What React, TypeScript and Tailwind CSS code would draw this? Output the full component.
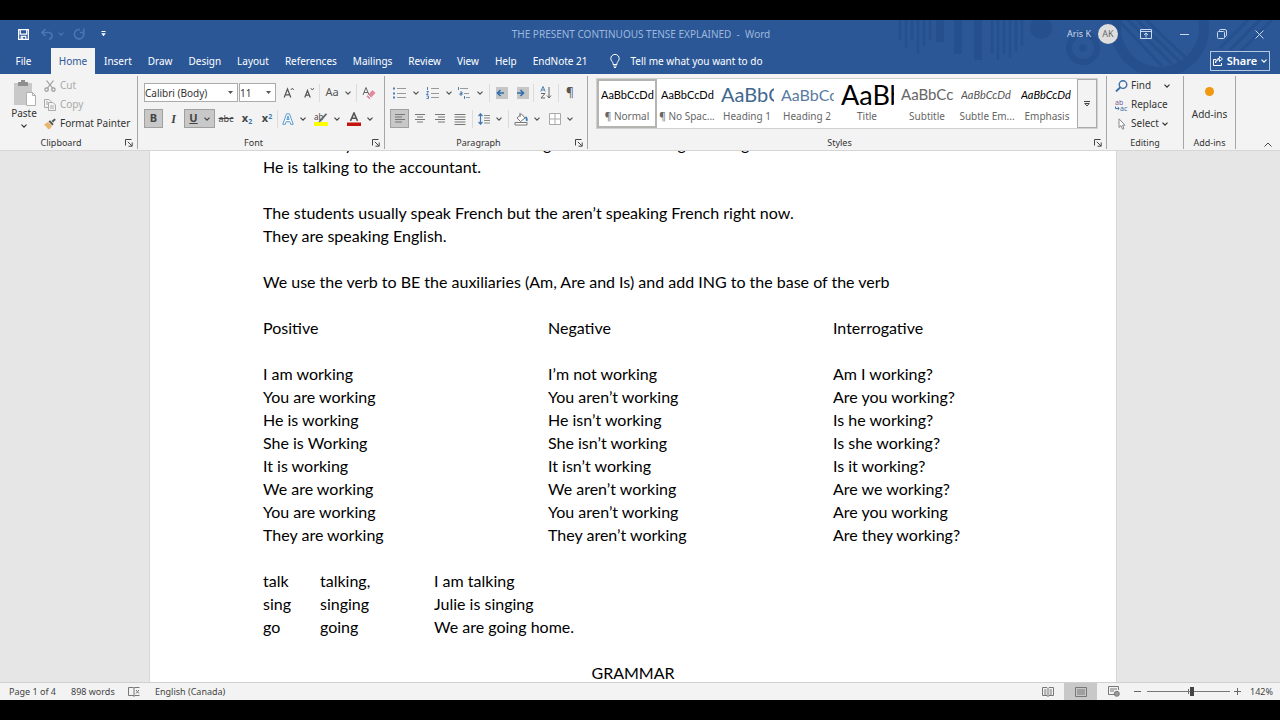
import React from "react";

type Kids = { children?: React.ReactNode };

const Chevron = ({ className = "" }: { className?: string }) => (
  <svg viewBox="0 0 6 4" className={`h-1 w-1.5 shrink-0 ${className}`} fill="none" stroke="currentColor" strokeWidth="1.2" aria-hidden="true">
    <path d="M0.5 0.6 3 3.1 5.5 0.6" />
  </svg>
);

const Rule = () => <span className="h-[18px] w-px shrink-0 bg-[#dcdcdc]" />;

const Tool = ({ label, w, active = false, children }: Kids & { label: string; w: string; active?: boolean }) => (
  <button
    type="button"
    aria-label={label}
    className={`flex h-[19px] shrink-0 items-center justify-center gap-1.5 ${w} ${active ? "border border-[#a0a0a0] bg-[#c8c8c8]" : ""}`}
  >
    {children}
  </button>
);

const Launcher = ({ label }: { label: string }) => (
  <button type="button" aria-label={label} className="absolute right-1 bottom-0.5">
    <svg viewBox="0 0 8 8" className="size-2" fill="none" stroke="#444" strokeWidth="1" aria-hidden="true">
      <path d="M0.5 6.5V0.5H6.5M2.8 2.8 6.8 6.8M7.2 3.5V7.2H3.5" />
    </svg>
  </button>
);

const Group = ({ title, width, launcher, children }: Kids & { title: string; width: string; launcher?: boolean }) => (
  <section aria-label={title} className={`relative mt-0.5 mb-px flex flex-col border-r border-[#a6a6a6] ${width}`}>
    <div className="min-h-0 flex-1">{children}</div>
    <div className={`text-center text-[9px] leading-[13px] text-[#333] ${launcher ? "pr-[15px]" : ""}`}>{title}</div>
    {launcher && <Launcher label={`${title} settings`} />}
  </section>
);

const Lines = ({ d }: { d: string }) => (
  <svg viewBox="0 0 12 12" className="size-3" fill="none" stroke="#777" strokeWidth="1" aria-hidden="true">
    <path d={d} />
  </svg>
);

const Combo = ({ label, value, w }: { label: string; value: string; w: string }) => (
  <div className={`relative flex h-[19px] items-center border border-[#ababab] bg-white ${w}`}>
    <select aria-label={label} defaultValue={value} className="w-full appearance-none bg-transparent text-[10px] leading-4 text-[#333] outline-none">
      <option>{value}</option>
    </select>
    <svg viewBox="0 0 5 3" className="pointer-events-none absolute right-1 h-[3px] w-[5px]" fill="#555" aria-hidden="true">
      <path d="M0 0H5L2.5 3Z" />
    </svg>
  </div>
);

const tabs = ["Insert", "Draw", "Design", "Layout", "References", "Mailings", "Review", "View", "Help", "EndNote 21"];

const TitleArt = () => (
  <svg viewBox="0 0 400 54" className="pointer-events-none absolute top-0 right-0 h-[54px] w-[400px]" fill="none" stroke="#26508d" aria-hidden="true">
    <g strokeWidth="2.5">
      <path d="M20 0V20M26 0V28M32 0V20M38 0V34M44 0V26M50 0V20M112 0V34M118 0V40M124 0V34M130 0V38M136 0V32M142 0V26" />
    </g>
    <g strokeWidth="8">
      <path d="M60 0V22M78 0V34M98 0V40" />
    </g>
    <circle cx="161" cy="8" r="11" fill="#26508d" stroke="none" />
    <circle cx="203" cy="28" r="14" strokeWidth="6" />
    <circle cx="203" cy="28" r="4" fill="#26508d" stroke="none" />
    <circle cx="280" cy="8" r="44" strokeWidth="10" />
    <g strokeWidth="3">
      <path d="M248 0 292 44M257 0 300 42M266 0 308 40M240 2 282 46M350 30 380 0M358 34 392 0M340 28 368 0" />
    </g>
  </svg>
);

const Header = () => (
  <header className="relative shrink-0 bg-[#2b5797] text-white">
    <TitleArt />
    <div className="relative flex h-7 items-center">
      <div className="flex flex-1 items-center pl-[18px]">
        <button type="button" aria-label="Save">
          <svg viewBox="0 0 12 12" className="size-[11px]" fill="none" stroke="currentColor" strokeWidth="1.3" aria-hidden="true">
            <path d="M0.7 0.7H11.3V11.3H0.7ZM2.5 1V5.5H9.5V1M3.5 11V8H8.5V11M5 9V11" />
          </svg>
        </button>
        <button type="button" aria-label="Undo" className="ml-3 flex items-center gap-[5px] text-[#4b76b3]">
          <svg viewBox="0 0 12 12" className="size-3" fill="none" stroke="currentColor" strokeWidth="1.6" aria-hidden="true">
            <path d="M4.5 1 1 4.5 4.5 8M1 4.5H8C12 5 12 10.5 8 11.3" />
          </svg>
          <Chevron />
        </button>
        <button type="button" aria-label="Repeat" className="ml-[9px] text-[#4b76b3]">
          <svg viewBox="0 0 12 12" className="size-3" fill="none" stroke="currentColor" strokeWidth="1.6" aria-hidden="true">
            <path d="M7 1.6A4.7 4.7 0 1 0 10.6 5M7 4.5H10.8V0.5" />
          </svg>
        </button>
        <button type="button" aria-label="Customize Quick Access Toolbar" className="ml-4">
          <svg viewBox="0 0 5 6" className="h-1.5 w-[5px]" fill="currentColor" aria-hidden="true">
            <path d="M0.5 0H4.5V1H0.5ZM0.2 2.2H4.8L2.5 5.2Z" />
          </svg>
        </button>
      </div>
      <h1 className="text-[10px] whitespace-pre text-[#9db8dc]">THE PRESENT CONTINUOUS TENSE EXPLAINED  -  Word</h1>
      <div className="flex flex-1 items-center justify-end pr-4 text-[#c9d8ec]">
        <span className="text-[9px]">Aris K</span>
        <span className="ml-[7px] flex size-5 items-center justify-center rounded-full bg-[#dedede] text-[9px] text-[#666]">AK</span>
        <button type="button" aria-label="Ribbon display options" className="ml-[22px]">
          <svg viewBox="0 0 12 10" className="h-2.5 w-3" fill="none" stroke="currentColor" aria-hidden="true">
            <path d="M0.5 0.5H11.5V9.5H0.5ZM0.5 2.5H11.5M6 8.5V4M4 6 6 4 8 6" />
          </svg>
        </button>
        <button type="button" aria-label="Minimize" className="ml-7">
          <svg viewBox="0 0 9 9" className="size-[9px]" stroke="currentColor" aria-hidden="true"><path d="M0 4.5H9" /></svg>
        </button>
        <button type="button" aria-label="Restore" className="ml-7">
          <svg viewBox="0 0 10 10" className="size-2.5" fill="none" stroke="currentColor" aria-hidden="true">
            <rect x="0.5" y="2.5" width="7" height="7" rx="1" />
            <path d="M2.5 2.5V1.5Q2.5 0.5 3.5 0.5H8Q9.5 0.5 9.5 2V6.5Q9.5 7.5 7.5 7.5" />
          </svg>
        </button>
        <button type="button" aria-label="Close" className="ml-7">
          <svg viewBox="0 0 9 9" className="size-[9px]" stroke="currentColor" aria-hidden="true"><path d="M0.5 0.5 8.5 8.5M8.5 0.5 0.5 8.5" /></svg>
        </button>
      </div>
    </div>
    <nav className="relative flex h-[26px] items-stretch text-[10px]" aria-label="Ribbon tabs">
      <button type="button" className="w-[51px] pr-1 text-center">File</button>
      <button type="button" className="w-11 bg-[#f3f3f3] text-center text-[#2b5797]">Home</button>
      <div className="flex pl-px">
        {tabs.map((t) => (
          <button key={t} type="button" className="px-2 whitespace-nowrap">{t}</button>
        ))}
      </div>
      <button type="button" className="ml-3.5 flex items-center gap-[11px] whitespace-nowrap">
        <svg viewBox="0 0 10 14" className="h-3.5 w-2.5" fill="none" stroke="currentColor" aria-hidden="true">
          <path d="M3 10.5V9.2C3 7.8 0.8 7 0.8 4.6A4.2 4.2 0 0 1 9.2 4.6C9.2 7 7 7.8 7 9.2V10.5ZM3.2 12H6.8M4 13.5H6" />
        </svg>
        Tell me what you want to do
      </button>
      <button type="button" className="mt-[3px] mr-2.5 mb-[3px] ml-auto flex w-[60px] items-center justify-center gap-1 border border-[#b5c8e2] text-[11px] font-semibold">
        <svg viewBox="0 0 10 10" className="size-2.5 shrink-0" fill="none" stroke="currentColor" aria-hidden="true">
          <path d="M3 3.5H0.5V9.5H8.5V7M2.5 7C3 4.5 4.5 3.5 6.5 3.5V5.5L9.5 3 6.5 0.5V2.3C4 2.5 2.6 4.5 2.5 7Z" />
        </svg>
        Share
        <Chevron />
      </button>
    </nav>
  </header>
);

const Clipboard = () => (
  <Group title="Clipboard" width="w-[138px]" launcher>
    <div className="flex pl-3 text-[10px] text-[#333]">
      <button type="button" className="flex w-6 flex-col items-center pt-1">
        <svg viewBox="0 0 24 26" className="h-[26px] w-6" aria-hidden="true">
          <path d="M2 3H20V25H2Z" fill="#c9c9c9" />
          <path d="M6 2H9V0H13V2H16V6H6Z" fill="#8f8f8f" />
          <path d="M14.5 12.5H20.5L23.5 15.5V25.5H14.5ZM20.5 12.5V15.5H23.5" fill="#fff" stroke="#b0b0b0" />
        </svg>
        <span className="leading-[14px]">Paste</span>
        <Chevron className="mt-1" />
      </button>
      <div className="ml-2 flex flex-col">
        <button type="button" className="flex h-[19px] items-center gap-1 text-[#a9a9a9]">
          <svg viewBox="0 0 12 12" className="size-3" fill="none" stroke="#999" strokeWidth="1.2" aria-hidden="true">
            <path d="M2.5 0.5 8.5 8M9.5 0.5 3.5 8" /><circle cx="2.6" cy="9.6" r="1.7" /><circle cx="9.4" cy="9.6" r="1.7" />
          </svg>
          Cut
        </button>
        <button type="button" className="flex h-[19px] items-center gap-1 text-[#a9a9a9]">
          <svg viewBox="0 0 12 12" className="size-3" fill="#f3f3f3" stroke="#aaa" aria-hidden="true">
            <path d="M0.5 0.5H5L7 2.5V8.5H0.5ZM2 3H4M2 5H4" /><path d="M4.5 3.5H9L11.5 6V11.5H4.5ZM6 7H10M6 9H10" />
          </svg>
          Copy
        </button>
        <button type="button" className="flex h-[19px] items-center gap-1 whitespace-nowrap">
          <svg viewBox="0 0 12 12" className="size-3" aria-hidden="true">
            <path d="M0 6.5 4 4 8 8 5.5 11.5 3.5 10.5 2.5 9Z" fill="#e8b56a" /><path d="M4.5 3.5 6 2.2 9.6 6 8.3 7.4Z" fill="#555" /><path d="M7.5 3 10.5 0.5 11.8 1.8 9 4.6Z" fill="#555" />
          </svg>
          Format Painter
        </button>
      </div>
    </div>
  </Group>
);

const FontGroup = () => (
  <Group title="Font" width="w-[247px]" launcher>
    <div className="flex items-center pt-[7px] pl-1.5 text-[#555]">
      <Combo label="Font" value="Calibri (Body)" w="w-[94px] mr-px" />
      <Combo label="Font size" value="11" w="w-[37px] mr-[3px]" />
      <Tool label="Grow font" w="w-5">
        <svg viewBox="0 0 12 12" className="size-3" fill="none" stroke="currentColor" aria-hidden="true">
          <path d="M1.2 10.5 4.5 2 7.8 10.5M2.3 7.8H6.7" strokeWidth="1.2" /><path d="M7.8 3 9.3 1.2 10.8 3" />
        </svg>
      </Tool>
      <Tool label="Shrink font" w="w-5">
        <svg viewBox="0 0 12 12" className="size-3" fill="none" stroke="currentColor" aria-hidden="true">
          <path d="M1.8 10.5 4.5 3.5 7.2 10.5M2.8 8.2H6.2" strokeWidth="1.2" /><path d="M7.8 1.2 9.3 3 10.8 1.2" />
        </svg>
      </Tool>
      <Rule />
      <Tool label="Change case" w="w-9"><span className="text-[11px]">Aa</span><Chevron /></Tool>
      <Rule />
      <Tool label="Clear formatting" w="w-6">
        <svg viewBox="0 0 14 14" className="size-3.5" aria-hidden="true">
          <path d="M1 9 4 1.5 7 9M2 6.5H6" fill="none" stroke="#666" /><path d="M4.5 10.5 10.5 4 13.5 7 7.5 13.2Z" fill="#e08a9d" /><path d="M6 9 9 12" stroke="#fff" />
        </svg>
      </Tool>
    </div>
    <div className="flex items-center pt-[7px] pl-1.5 text-[11px] text-[#444]">
      <Tool label="Bold" w="w-[19px]" active><b>B</b></Tool>
      <Tool label="Italic" w="w-[21px]"><i className="font-['Liberation_Serif',serif] text-xs font-bold">I</i></Tool>
      <Tool label="Underline" w="w-[31px]" active><b className="underline">U</b><Chevron /></Tool>
      <Tool label="Strikethrough" w="w-[22px]"><s className="text-[9px]">abc</s></Tool>
      <Tool label="Subscript" w="w-5"><b>x<sub className="text-[7px] text-[#3c7ab5]">2</sub></b></Tool>
      <Tool label="Superscript" w="w-5"><b>x<sup className="text-[7px] text-[#3c7ab5]">2</sup></b></Tool>
      <Rule />
      <Tool label="Text effects" w="w-8">
        <svg viewBox="0 0 12 12" className="size-3" fill="#fff" stroke="#5b9bd0" aria-hidden="true">
          <path d="M0.8 11.3 4.5 0.8H7.5L11.2 11.3H8.7L7.9 8.7H4.1L3.3 11.3ZM4.8 6.5H7.2L6 2.8Z" />
        </svg>
        <Chevron />
      </Tool>
      <Tool label="Highlight color" w="w-[34px]">
        <svg viewBox="0 0 14 14" className="size-3.5" aria-hidden="true">
          <rect y="10" width="14" height="4" fill="#ffff00" />
          <text x="0" y="8" fontSize="8" fill="#444" fontFamily="Noto Sans">ab</text>
          <path d="M13.3 2 7 9.5 4.5 10.5 5.5 8 11.5 1.5Z" fill="#666" />
        </svg>
        <Chevron />
      </Tool>
      <Tool label="Font color" w="w-8">
        <svg viewBox="0 0 14 14" className="size-3.5" aria-hidden="true">
          <rect y="10.5" width="14" height="3.5" fill="#c4150c" />
          <path d="M3.5 8.8 7 1 10.5 8.8M4.8 6.2H9.2" fill="none" stroke="#555" strokeWidth="1.6" />
        </svg>
        <Chevron />
      </Tool>
    </div>
  </Group>
);

const Paragraph = () => (
  <Group title="Paragraph" width="w-[203px]" launcher>
    <div className="flex items-center pt-[7px] pl-[5px] text-[#555]">
      <Tool label="Bullets" w="w-8">
        <svg viewBox="0 0 14 12" className="h-3 w-3.5" aria-hidden="true"><path d="M0 1.5H2M0 6.5H2M0 10.5H2" stroke="#4a80b5" strokeWidth="2" /><path d="M4 1.5H13M4 6.5H13M4 10.5H13" stroke="#999" /></svg>
        <Chevron />
      </Tool>
      <Tool label="Numbering" w="w-[34px]">
        <svg viewBox="0 0 14 12" className="h-3 w-3.5" aria-hidden="true"><path d="M1.5 0V3M0.5 4.5H2.5L0.5 7.5H2.5M0.5 9H2.5V11.5H0.5" fill="none" stroke="#4a80b5" /><path d="M5 1.5H13M5 6.5H13M5 10.5H13" stroke="#999" /></svg>
        <Chevron />
      </Tool>
      <Tool label="Multilevel list" w="w-7">
        <svg viewBox="0 0 14 12" className="h-3 w-3.5" aria-hidden="true"><path d="M1.5 0V3M3 5H5V8H3V6.5H5M7.5 9V12" fill="none" stroke="#4a80b5" /><path d="M3 1.5H11M7 6.5H12M9 10.5H13" stroke="#999" /></svg>
        <Chevron />
      </Tool>
      <span className="w-[5px]" />
      <Rule />
      <Tool label="Decrease indent" w="w-[23px]">
        <svg viewBox="0 0 12 12" className="size-3" aria-hidden="true"><rect width="12" height="12" fill="#c6c6c6" /><path d="M8 6H1.5M4.5 3 1.5 6 4.5 9" fill="none" stroke="#2f6fae" strokeWidth="1.6" /></svg>
      </Tool>
      <Tool label="Increase indent" w="w-5">
        <svg viewBox="0 0 12 12" className="size-3" aria-hidden="true"><rect width="12" height="12" fill="#c6c6c6" /><path d="M0 6H6.5M3.5 3 6.5 6 3.5 9" fill="none" stroke="#2f6fae" strokeWidth="1.6" /></svg>
      </Tool>
      <Rule />
      <Tool label="Sort" w="w-6">
        <svg viewBox="0 0 12 13" className="h-[13px] w-3" fill="none" aria-hidden="true"><path d="M0.8 5.5 3 0.5 5.2 5.5M1.5 4H4.5" stroke="#4a80b5" /><path d="M1 7.5H5L1 12H5" stroke="#666" /><path d="M9 1V12M7 9.5 9 12 11 9.5" stroke="#666" /></svg>
      </Tool>
      <Rule />
      <Tool label="Show formatting marks" w="w-[22px]"><span className="text-xs">¶</span></Tool>
    </div>
    <div className="flex items-center pt-[7px] pl-[5px] text-[#555]">
      <Tool label="Align left" w="w-[19px]" active><Lines d="M1 1.5H11M1 4H8M1 6.5H11M1 9H8" /></Tool>
      <Tool label="Center" w="w-[21px]"><Lines d="M1 1.5H11M3 4H9M1 6.5H11M3 9H9" /></Tool>
      <Tool label="Align right" w="w-5"><Lines d="M1 1.5H11M4 4H11M1 6.5H11M4 9H11" /></Tool>
      <Tool label="Justify" w="w-5"><Lines d="M0.5 1.5H11.5M0.5 4H11.5M0.5 6.5H11.5M0.5 9H11.5M0.5 11.5H11.5" /></Tool>
      <span className="w-0.5" />
      <Rule />
      <Tool label="Line spacing" w="w-[34px]">
        <svg viewBox="0 0 12 12" className="size-3" fill="none" aria-hidden="true"><path d="M2.5 1V11M0.5 3 2.5 0.8 4.5 3M0.5 9 2.5 11.2 4.5 9" stroke="#3c7ab5" strokeWidth="1.2" /><path d="M6 2.5H12M6 5H12M6 7.5H12M6 10H12" stroke="#888" /></svg>
        <Chevron />
      </Tool>
      <span className="w-px" />
      <Rule />
      <Tool label="Shading" w="w-9">
        <svg viewBox="0 0 14 14" className="size-3.5" fill="none" stroke="#777" aria-hidden="true"><path d="M1 10.5H13V13H1ZM3 6 7.5 2 11 6 6.5 9.5ZM6 0.8V5" fill="#fff" /><path d="M11.5 5Q13.5 7 12.5 9" stroke="#3c7ab5" strokeWidth="1.8" /></svg>
        <Chevron />
      </Tool>
      <Tool label="Borders" w="w-8">
        <svg viewBox="0 0 12 12" className="size-3" fill="none" stroke="#a9a9a9" aria-hidden="true"><path d="M0.5 0.5H11.5V11.5H0.5ZM6 0.5V11.5M0.5 6H11.5" fill="#fff" /></svg>
        <Chevron />
      </Tool>
    </div>
  </Group>
);

const styles = [
  { name: "¶ Normal", sample: "AaBbCcDd", look: "text-[11px] text-black" },
  { name: "¶ No Spac...", sample: "AaBbCcDd", look: "text-[11px] text-black" },
  { name: "Heading 1", sample: "AaBbC", look: "text-[20px] text-[#41688f]" },
  { name: "Heading 2", sample: "AaBbCc", look: "text-[16px] text-[#5a7ba0]" },
  { name: "Title", sample: "AaBb", look: "text-[27px] text-black" },
  { name: "Subtitle", sample: "AaBbCc", look: "text-[15px] text-[#666]" },
  { name: "Subtle Em...", sample: "AaBbCcDd", look: "text-[11px] text-[#555] italic" },
  { name: "Emphasis", sample: "AaBbCcDd", look: "text-[11px] text-black italic" },
];

const StylesGroup = () => (
  <Group title="Styles" width="min-w-0 flex-1" launcher>
    <div className="mt-0.5 mr-2 ml-2 flex h-[51px] border border-[#d0d0d0] bg-white">
      <div className="flex min-w-0 flex-1 overflow-hidden">
        {styles.map((s, i) => (
          <button
            key={s.name}
            type="button"
            className={`flex w-[60px] shrink-0 flex-col border-2 ${i === 0 ? "border-[#b4b4b0]" : "border-transparent"}`}
          >
            <span className={`ml-0.5 flex h-[27px] w-[53px] items-center overflow-hidden font-['Lato','Noto_Sans',sans-serif] leading-[27px] whitespace-nowrap ${s.look}`}>{s.sample}</span>
            <span className="w-full text-center text-[10px] leading-4 whitespace-nowrap text-[#666]">{s.name}</span>
          </button>
        ))}
      </div>
      <button type="button" aria-label="More styles" className="flex w-5 items-center justify-center border border-[#ababab] bg-[#f3f3f3] text-[#444]">
        <svg viewBox="0 0 6 6" className="size-1.5" fill="none" stroke="currentColor" aria-hidden="true"><path d="M0 0.5H6M0.8 2.5H5.2L3 5Z" /></svg>
      </button>
    </div>
  </Group>
);

const Editing = () => (
  <Group title="Editing" width="w-[77px]">
    <div className="flex flex-col pl-2 text-[10px] text-[#333]">
      <button type="button" className="flex h-[19px] items-center gap-[3px]">
        <svg viewBox="0 0 13 12" className="h-3 w-[13px]" fill="none" stroke="#3c6fa8" strokeWidth="1.4" aria-hidden="true"><circle cx="8" cy="4.6" r="3.8" /><path d="M5.2 7.4 1 11.4" strokeWidth="2" /></svg>
        Find
        <Chevron className="ml-2.5" />
      </button>
      <button type="button" className="flex h-[19px] items-center gap-[3px]">
        <svg viewBox="0 0 13 12" className="h-3 w-[13px]" aria-hidden="true">
          <text x="0" y="6" fontSize="7" fill="#7b5a9a" fontFamily="Noto Sans">ab</text>
          <text x="5" y="12" fontSize="7" fill="#3c6fa8" fontFamily="Noto Sans">ac</text>
          <path d="M0.5 7.5V9.5H4M2.8 8.2 4.2 9.5 2.8 10.8" fill="none" stroke="#3c6fa8" />
        </svg>
        Replace
      </button>
      <button type="button" className="flex h-[19px] items-center gap-[3px]">
        <svg viewBox="0 0 13 12" className="h-3 w-[13px]" fill="#fff" stroke="#888" aria-hidden="true"><path d="M4 0.8V9.5L6 7.6 7.5 11.2 9 10.5 7.5 7.2H10Z" /></svg>
        Select
        <Chevron />
      </button>
    </div>
  </Group>
);

const Ribbon = () => (
  <div className="flex h-[77px] shrink-0 border-b border-[#d6d6d6] bg-[#f3f3f3]">
    <Clipboard />
    <FontGroup />
    <Paragraph />
    <StylesGroup />
    <Editing />
    <Group title="Add-ins" width="w-[52px]">
      <button type="button" className="flex w-full flex-col items-center pt-[11px] text-[10px] leading-[14px] text-[#333]">
        <span className="mb-[11px] size-[9px] rounded-full bg-[#f0980f]" />
        Add-ins
      </button>
    </Group>
    <div className="flex w-11 items-end justify-end pr-2 pb-[3px] text-[#444]">
      <button type="button" aria-label="Collapse ribbon">
        <svg viewBox="0 0 8 5" className="h-[5px] w-2" fill="none" stroke="currentColor" aria-hidden="true"><path d="M0.5 4.5 4 1 7.5 4.5" /></svg>
      </button>
    </div>
  </div>
);

const conjugation = [
  ["I am working", "I’m not working", "Am I working?"],
  ["You are working", "You aren’t working", "Are you working?"],
  ["He is working", "He isn’t working", "Is he working?"],
  ["She is Working", "She isn’t working", "Is she working?"],
  ["It is working", "It isn’t working", "Is it working?"],
  ["We are working", "We aren’t working", "Are we working?"],
  ["You are working", "You aren’t working", "Are you working"],
  ["They are working", "They aren’t working", "Are they working?"],
];

const verbs = [
  ["talk", "talking,", "I am talking"],
  ["sing", "singing", "Julie is singing"],
  ["go", "going", "We are going home."],
];

const Document = () => (
  <main className="flex min-h-0 flex-1 justify-center overflow-hidden bg-[#e6e6e6] pr-3.5">
    <article className="w-full max-w-[968px] border-x border-[#d8d8d8] bg-white px-[113px] font-['Lato','Noto_Sans',sans-serif] text-base leading-[23px] text-black">
      <p className="-mt-[19px]">The attorney and the assistant are talking to the bank manager but right now</p>
      <p>He is talking to the accountant.</p>
      <p className="mt-[23px]">The students usually speak French but the aren’t speaking French right now.</p>
      <p>They are speaking English.</p>
      <p className="mt-[23px]">We use the verb to BE the auxiliaries (Am, Are and Is) and add ING to the base of the verb</p>
      <table className="mt-[23px] w-full table-fixed text-left">
        <thead>
          <tr>
            <th scope="col" className="w-[285px] p-0 pb-[23px] font-normal">Positive</th>
            <th scope="col" className="w-[285px] p-0 pb-[23px] font-normal">Negative</th>
            <th scope="col" className="p-0 pb-[23px] font-normal">Interrogative</th>
          </tr>
        </thead>
        <tbody>
          {conjugation.map((row) => (
            <tr key={row[1] + row[2]}>{row.map((c) => <td key={c} className="p-0">{c}</td>)}</tr>
          ))}
        </tbody>
      </table>
      <table className="mt-[23px]">
        <tbody>
          {verbs.map(([base, ing, example]) => (
            <tr key={base}>
              <td className="w-[57px] p-0">{base}</td>
              <td className="w-[114px] p-0">{ing}</td>
              <td className="p-0">{example}</td>
            </tr>
          ))}
        </tbody>
      </table>
      <p className="mt-[23px] text-center">GRAMMAR</p>
    </article>
  </main>
);

const StatusBar = () => (
  <footer className="flex h-[18px] shrink-0 items-center border-t border-[#d0d0d0] bg-[#f3f3f3] pl-[9px] text-[9px] text-[#444]">
    <span className="w-[62px]">Page 1 of 4</span>
    <span className="w-[57px]">898 words</span>
    <button type="button" aria-label="Proofing errors">
      <svg viewBox="0 0 12 10" className="h-2.5 w-3" fill="none" stroke="#777" aria-hidden="true"><path d="M0.5 0.5H5.5L6 1.5V9.5L5.5 8.5H0.5ZM6 1.5 6.5 0.5H11.5M6.5 8.5H11.5M8 3 11 6.5M11 3 8 6.5" /></svg>
    </button>
    <span className="ml-[15px]">English (Canada)</span>
    <div className="ml-auto flex h-full items-center">
      <button type="button" aria-label="Read mode" className="flex h-full w-[33px] items-center justify-center">
        <svg viewBox="0 0 12 10" className="h-2.5 w-3" fill="none" stroke="#777" aria-hidden="true"><path d="M0.5 0.5H5L6 1.5 7 0.5H11.5V8.5H7L6 9.5 5 8.5H0.5ZM6 1.5V9.5M2 3H4.5M2 5H4.5M2 7H4.5M7.5 3H10M7.5 5H10M7.5 7H10" /></svg>
      </button>
      <button type="button" aria-label="Print layout" className="flex h-full w-[33px] items-center justify-center bg-[#c8c8c8]">
        <svg viewBox="0 0 12 10" className="h-2.5 w-3" fill="none" stroke="#777" aria-hidden="true"><path d="M0.5 0.5H11.5V9.5H0.5ZM2 3H10M2 5H10M2 7H10" /></svg>
      </button>
      <button type="button" aria-label="Web layout" className="flex h-full w-[34px] items-center justify-center">
        <svg viewBox="0 0 12 11" className="h-[11px] w-3" fill="none" stroke="#777" aria-hidden="true"><path d="M6 8.5H0.5V0.5H10.5V4M2 3H9M2 5H6" /><circle cx="8.8" cy="7.8" r="2.5" fill="#999" /></svg>
      </button>
      <button type="button" aria-label="Zoom out" className="flex w-3 justify-center">
        <svg viewBox="0 0 7 7" className="size-[7px]" stroke="#666" aria-hidden="true"><path d="M0 3.5H7" /></svg>
      </button>
      <span className="relative mx-1 flex items-center">
        <span className="absolute left-[41px] h-[5px] w-px bg-[#666]" />
        <input
          type="range"
          aria-label="Zoom"
          min={0}
          max={100}
          defaultValue={55}
          className="relative h-px w-[83px] appearance-none bg-[#777] [&::-webkit-slider-thumb]:h-[9px] [&::-webkit-slider-thumb]:w-1 [&::-webkit-slider-thumb]:appearance-none [&::-webkit-slider-thumb]:bg-[#444]"
        />
      </span>
      <button type="button" aria-label="Zoom in" className="flex w-[7px] justify-center">
        <svg viewBox="0 0 7 7" className="size-[7px]" stroke="#666" aria-hidden="true"><path d="M0 3.5H7M3.5 0V7" /></svg>
      </button>
      <span className="w-[39px] pr-[7px] text-right">142%</span>
    </div>
  </footer>
);

export default function App() {
  return (
    <div className="flex h-screen flex-col bg-black py-5 font-['Noto_Sans',sans-serif]">
      <Header />
      <Ribbon />
      <Document />
      <StatusBar />
    </div>
  );
}
